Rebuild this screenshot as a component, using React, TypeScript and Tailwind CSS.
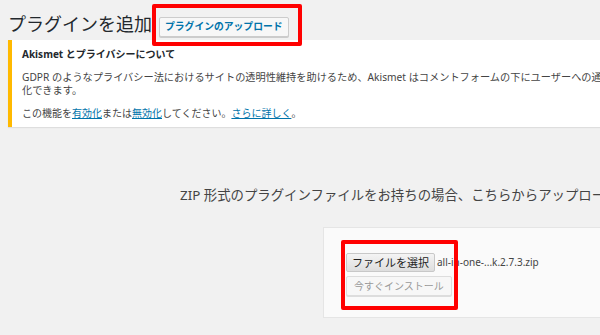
import React from "react";

export default function App() {
  const font = { fontFamily: '"Noto Sans", "Noto Sans CJK JP", sans-serif' };
  return (
    <div className="w-[600px] h-[335px] overflow-hidden bg-[#f1f1f1] text-[#444]" style={font}>
      <div className="flex items-center pt-[11px] pl-[8px]">
        <h1 className="text-[18px] leading-[26px] text-[#23282d] font-normal whitespace-nowrap">プラグインを追加</h1>
        <div className="relative ml-[7px]">
          <button className="h-[20px] px-[5px] border border-[#ccc] bg-[#f7f7f7] rounded-[2px] text-[#0073aa] font-bold text-[9.8px] leading-[18px] whitespace-nowrap shadow-[0_1px_0_#ccc]">
            プラグインのアップロード
          </button>
          <div className="absolute -left-[7px] -right-[13px] -top-[8px] -bottom-[9px] border-4 border-[#ff0000] rounded-[2px] pointer-events-none" />
        </div>
      </div>

      <div className="mt-[3px] ml-[8px] w-[800px] bg-white border-l-4 border-[#ffb900] pl-[10px] pt-[6px] pb-[7px] shadow-[0_1px_1px_rgba(0,0,0,0.08)]">
        <div className="text-[10px] leading-[16px] font-bold text-[#23282d] whitespace-nowrap">Akismet とプライバシーについて</div>
        <div className="mt-[9px] text-[10.2px] leading-[13px] whitespace-nowrap">
          <div>GDPR のようなプライバシー法におけるサイトの透明性維持を助けるため、Akismet はコメントフォームの下にユーザーへの通知を表示する機能を有効</div>
          <div>化できます。</div>
        </div>
        <div className="mt-[10px] text-[10px] leading-[13px] whitespace-nowrap">
          この機能を<span className="text-[#0073aa] underline">有効化</span>または<span className="text-[#0073aa] underline">無効化</span>してください。<span className="text-[#0073aa] underline">さらに詳しく</span>。
        </div>
      </div>

      <div className="mt-[58px] pl-[180px] text-[13.4px] leading-[20px] whitespace-nowrap text-[#444]">
        ZIP 形式のプラグインファイルをお持ちの場合、こちらからアップロードしてインストールできます。
      </div>

      <div className="mt-[22px] ml-[323px] w-[400px] bg-[#fafafa] border border-[#e5e5e5] pl-[22px] pt-[25px] pb-[21px]">
        <div className="relative flex flex-col items-start gap-[4px]">
          <div className="flex items-center">
            <button className="h-[19px] px-[5px] border border-[#c8c8c8] rounded-[2px] bg-gradient-to-b from-[#f4f4f4] to-[#dedede] text-[11px] leading-[17px] text-[#222] whitespace-nowrap">
              ファイルを選択
            </button>
            <span className="ml-[2px] text-[10px] text-[#444] whitespace-nowrap">all-in-one-...k.2.7.3.zip</span>
          </div>
          <button className="h-[20px] px-[7px] border border-[#ddd] rounded-[2px] bg-[#f7f7f7] text-[10px] leading-[18px] text-[#999] whitespace-nowrap shadow-[0_1px_0_#ddd]">
            今すぐインストール
          </button>
          <div className="absolute -left-[5px] -top-[13px] w-[117px] h-[70px] border-4 border-[#ff0000] rounded-[2px] pointer-events-none" />
        </div>
      </div>
    </div>
  );
}
